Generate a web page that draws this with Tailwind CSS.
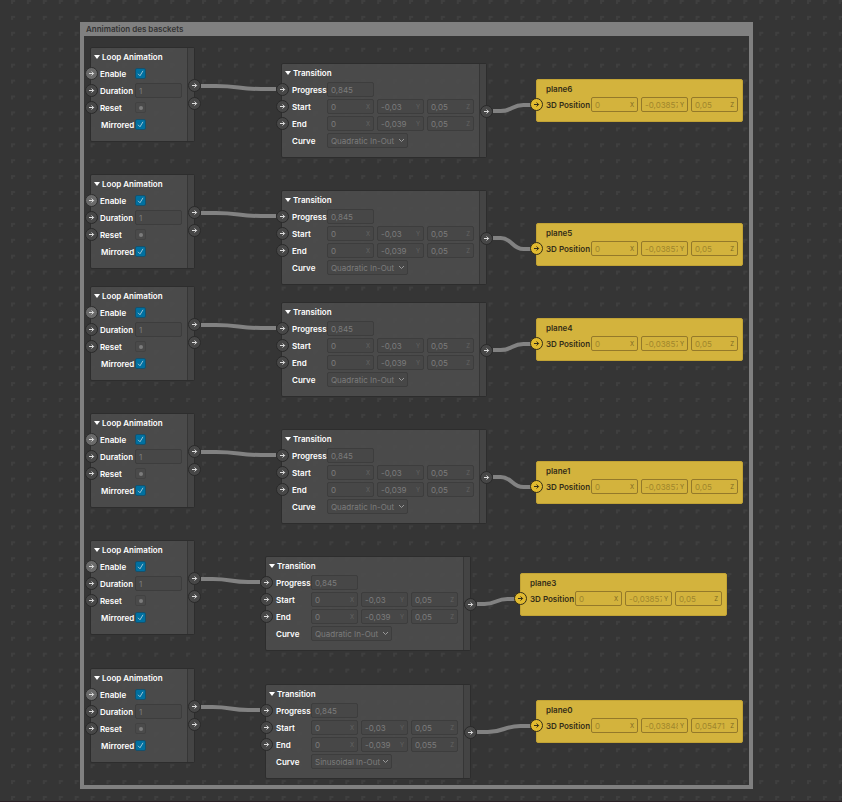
<!DOCTYPE html>
<html lang="en">
<head>
  <meta charset="UTF-8" />
  <meta name="viewport" content="width=device-width, initial-scale=1.0" />
  <title>Patch Editor</title>
  <script src="https://cdn.jsdelivr.net/npm/@tailwindcss/browser@4"></script>
</head>
<body class="bg-[#353535] font-['Inter',sans-serif] text-[8px] leading-none text-white">
  <main id="canvas" class="relative min-h-screen overflow-hidden border-b border-[#2a2026]">
    <!-- Grid -->
    <svg class="absolute inset-0 w-full h-full" aria-hidden="true">
      <defs>
        <pattern id="grid" x="11" y="0" width="15.92" height="15.92" patternUnits="userSpaceOnUse">
          <path d="M0 0h4v2h-2v2h-2z" fill="#3f3f3f" />
        </pattern>
      </defs>
      <rect width="100%" height="100%" fill="url(#grid)" />
    </svg>

    <!-- Comment frame -->
    <section class="relative ml-20 mt-[22px] mb-3 w-[673px] h-[767px] border-4 border-t-0 border-[#808080]">
      <h1 class="flex items-center h-[14px] pl-[2px] bg-[#808080] font-semibold text-[#333]">Annimation des basckets</h1>
    </section>

    <svg id="wires" class="absolute inset-0 w-full h-full" fill="none" stroke="#828282" stroke-width="4" aria-hidden="true"></svg>
    <div id="nodes"></div>
  </main>

  <script>
    // one entry per chain: [x, y] of each patch
    const rows = [
      { name: 'plane6', loop: [90, 47],  transition: [281, 63],  plane: [536, 79],  y: '-0,03857', z: '0,05', endZ: '0,05', curve: 'Quadratic In-Out' },
      { name: 'plane5', loop: [90, 174], transition: [281, 190], plane: [536, 223], y: '-0,03857', z: '0,05', endZ: '0,05', curve: 'Quadratic In-Out' },
      { name: 'plane4', loop: [90, 286], transition: [281, 302], plane: [536, 318], y: '-0,03857', z: '0,05', endZ: '0,05', curve: 'Quadratic In-Out' },
      { name: 'plane1', loop: [90, 413], transition: [281, 429], plane: [536, 461], y: '-0,03857', z: '0,05', endZ: '0,05', curve: 'Quadratic In-Out' },
      { name: 'plane3', loop: [90, 540], transition: [265, 556], plane: [520, 573], y: '-0,03857', z: '0,05', endZ: '0,05', curve: 'Quadratic In-Out' },
      { name: 'plane0', loop: [90, 668], transition: [265, 684], plane: [536, 700], y: '-0,03848', z: '0,05471', endZ: '0,055', curve: 'Sinusoidal In-Out' }
    ];

    const arrow = `<svg class="size-[7px]" viewBox="0 0 7 7" fill="none" stroke="currentColor" stroke-width="1"><path d="M1 3.5h4.6M3.6 1.5l2 2-2 2" /></svg>`;

    const port = (pos, color) =>
      `<button type="button" aria-label="Port" class="absolute ${pos} ${color} flex items-center justify-center size-[13px] rounded-full border">${arrow}</button>`;

    const dark = 'bg-[#474747] border-[#292929] text-[#dedede]';
    const light = 'bg-[#6a6a6a] border-[#2e2e2e] text-[#dcdcdc]';
    const gold = 'bg-[#e1ba2f] border-[#332d18] text-[#332d18]';

    const title = (text) => `
      <h2 class="h-[17px] font-semibold">
        <button type="button" class="flex items-center gap-[2px] h-full pl-[2px]">
          <svg class="w-[6px] h-1" viewBox="0 0 6 4" fill="currentColor"><path d="M0 0h6L3 4z" /></svg>${text}
        </button>
      </h2>`;

    const field = (id, value, axis, label) => `
      <span class="flex items-center w-[47px] h-[15px] px-[3px] rounded-xs border border-[#3d3d3d] bg-[#474747] text-[#7c7c7c]">
        <input id="${id}" type="text" value="${value}" aria-label="${label}" class="flex-1 min-w-0 h-full outline-none" />
        ${axis ? `<span class="pl-[2px] text-[6px] text-[#636363]">${axis}</span>` : ''}
      </span>`;

    const goldField = (id, value, axis, label) => `
      <span class="flex items-center w-[47px] h-[15px] px-[3px] rounded-xs border border-[#94792a] text-[#a0862c]">
        <input id="${id}" type="text" value="${value}" aria-label="${label}" class="flex-1 min-w-0 h-full outline-none" />
        <span class="pl-[2px] text-[6px] text-[#7d6923]">${axis}</span>
      </span>`;

    const checkbox = (id) => `
      <span class="relative flex size-[11px]">
        <input id="${id}" type="checkbox" checked class="appearance-none size-full rounded-xs border border-[#17506a] bg-[#0070a0]" />
        <svg class="absolute inset-0 size-full pointer-events-none" viewBox="0 0 11 11" fill="none" stroke="#9cc3d4"><path d="M3 5.8l2 2 3-5" /></svg>
      </span>`;

    const loopNode = (row) => {
      const id = row.name + '-loop';
      return `
      <article class="absolute flex w-[105px] h-[95px] rounded-xs border border-[#2d2d2d] bg-[#4c4c4c]/95" style="left:${row.loop[0]}px;top:${row.loop[1]}px">
        <div class="flex-1 pl-[1px]">
          ${title('Loop Animation')}
          <div class="relative flex items-center h-[17px]">${port('-left-[7px]', light)}
            <label for="${id}-enable" class="w-[43px] pl-2 font-semibold">Enable</label>${checkbox(id + '-enable')}
          </div>
          <div class="relative flex items-center h-[17px]">${port('-left-[7px]', dark)}
            <label for="${id}-duration" class="w-[43px] pl-2 font-semibold">Duration</label>${field(id + '-duration', '1', '', 'Duration')}
          </div>
          <div class="relative flex items-center h-[17px]">${port('-left-[7px]', dark)}
            <label for="${id}-reset" class="w-[43px] pl-2 font-semibold">Reset</label>
            <button id="${id}-reset" type="button" class="flex items-center justify-center size-[11px] rounded-xs border border-[#424242]"><span class="size-1 rounded-full bg-[#7c7c7c]"></span></button>
          </div>
          <div class="flex items-center h-[17px]">
            <label for="${id}-mirrored" class="w-[43px] pl-[9px] font-semibold">Mirrored</label>${checkbox(id + '-mirrored')}
          </div>
        </div>
        <div class="relative w-[7px] border-l border-[#363636] bg-[#444]">${port('top-[31px] -right-[7px]', dark)}${port('top-[49px] -right-[7px]', dark)}</div>
      </article>`;
    };

    const vectorRow = (id, label, y, z) => `
      <div class="relative flex items-center gap-[3px] h-[17px]">${port('-left-[7px]', dark)}
        <label for="${id}-x" class="w-[41px] pl-[9px] font-semibold">${label}</label>
        ${field(id + '-x', '0', 'X', label + ' X')}${field(id + '-y', y, 'Y', label + ' Y')}${field(id + '-z', z, 'Z', label + ' Z')}
      </div>`;

    const transitionNode = (row) => {
      const id = row.name + '-transition';
      return `
      <article class="absolute flex w-[206px] h-[95px] rounded-xs border border-[#2d2d2d] bg-[#4c4c4c]/95" style="left:${row.transition[0]}px;top:${row.transition[1]}px">
        <div class="flex-1 pl-[1px]">
          ${title('Transition')}
          <div class="relative flex items-center gap-[3px] h-[17px]">${port('-left-[7px]', dark)}
            <label for="${id}-progress" class="w-[41px] pl-[9px] font-semibold">Progress</label>${field(id + '-progress', '0,845', '', 'Progress')}
          </div>
          ${vectorRow(id + '-start', 'Start', '-0,03', '0,05')}
          ${vectorRow(id + '-end', 'End', '-0,039', row.endZ)}
          <div class="flex items-center gap-[3px] h-[17px]">
            <label for="${id}-curve" class="w-[41px] pl-[9px] font-semibold">Curve</label>
            <span class="relative flex items-center">
              <select id="${id}-curve" class="appearance-none w-[81px] h-[15px] pl-[3px] rounded-xs border border-[#3d3d3d] bg-[#474747] text-[#7c7c7c]"><option>${row.curve}</option></select>
              <svg class="absolute right-[3px] w-[7px] h-[5px] pointer-events-none" viewBox="0 0 7 5" fill="none" stroke="#999"><path d="M1 1l2.5 2.5L6 1" /></svg>
            </span>
          </div>
        </div>
        <div class="relative w-[7px] border-l border-[#363636] bg-[#444]">${port('top-[41px] -right-[7px]', dark)}</div>
      </article>`;
    };

    const planeNode = (row) => {
      const id = row.name + '-position';
      return `
      <article class="absolute w-[207px] h-[43px] rounded-xs border border-[#c2a335] bg-[#d3b33d] text-[#332d18]" style="left:${row.plane[0]}px;top:${row.plane[1]}px">
        <h2 class="flex items-center h-[17px] pl-[9px] font-semibold">${row.name}</h2>
        <div class="relative flex items-center gap-[3px] h-[15px]">${port('-left-[7px]', gold)}
          <label for="${id}-x" class="w-[51px] pl-[9px] font-semibold whitespace-nowrap">3D Position</label>
          ${goldField(id + '-x', '0', 'X', 'Position X')}${goldField(id + '-y', row.y, 'Y', 'Position Y')}${goldField(id + '-z', row.z, 'Z', 'Position Z')}
        </div>
      </article>`;
    };

    // flat at both ends, S-curve in the middle
    const wire = (x1, y1, x2, y2) => {
      const mid = (x1 + x2) / 2;
      const flat = (x2 - x1) / 5;
      return `<path d="M${x1} ${y1}H${x1 + flat}C${mid} ${y1} ${mid} ${y2} ${x2 - flat} ${y2}H${x2}" />`;
    };

    document.getElementById('nodes').innerHTML =
      rows.map(row => loopNode(row) + transitionNode(row) + planeNode(row)).join('');

    document.getElementById('wires').innerHTML = rows.map(row => {
      const [lx, ly] = row.loop;
      const [tx, ty] = row.transition;
      const [px, py] = row.plane;
      return wire(lx + 111, ly + 39, tx - 5, ty + 26) + wire(tx + 212, ty + 48, px - 5, py + 26);
    }).join('');
  </script>
</body>
</html>
